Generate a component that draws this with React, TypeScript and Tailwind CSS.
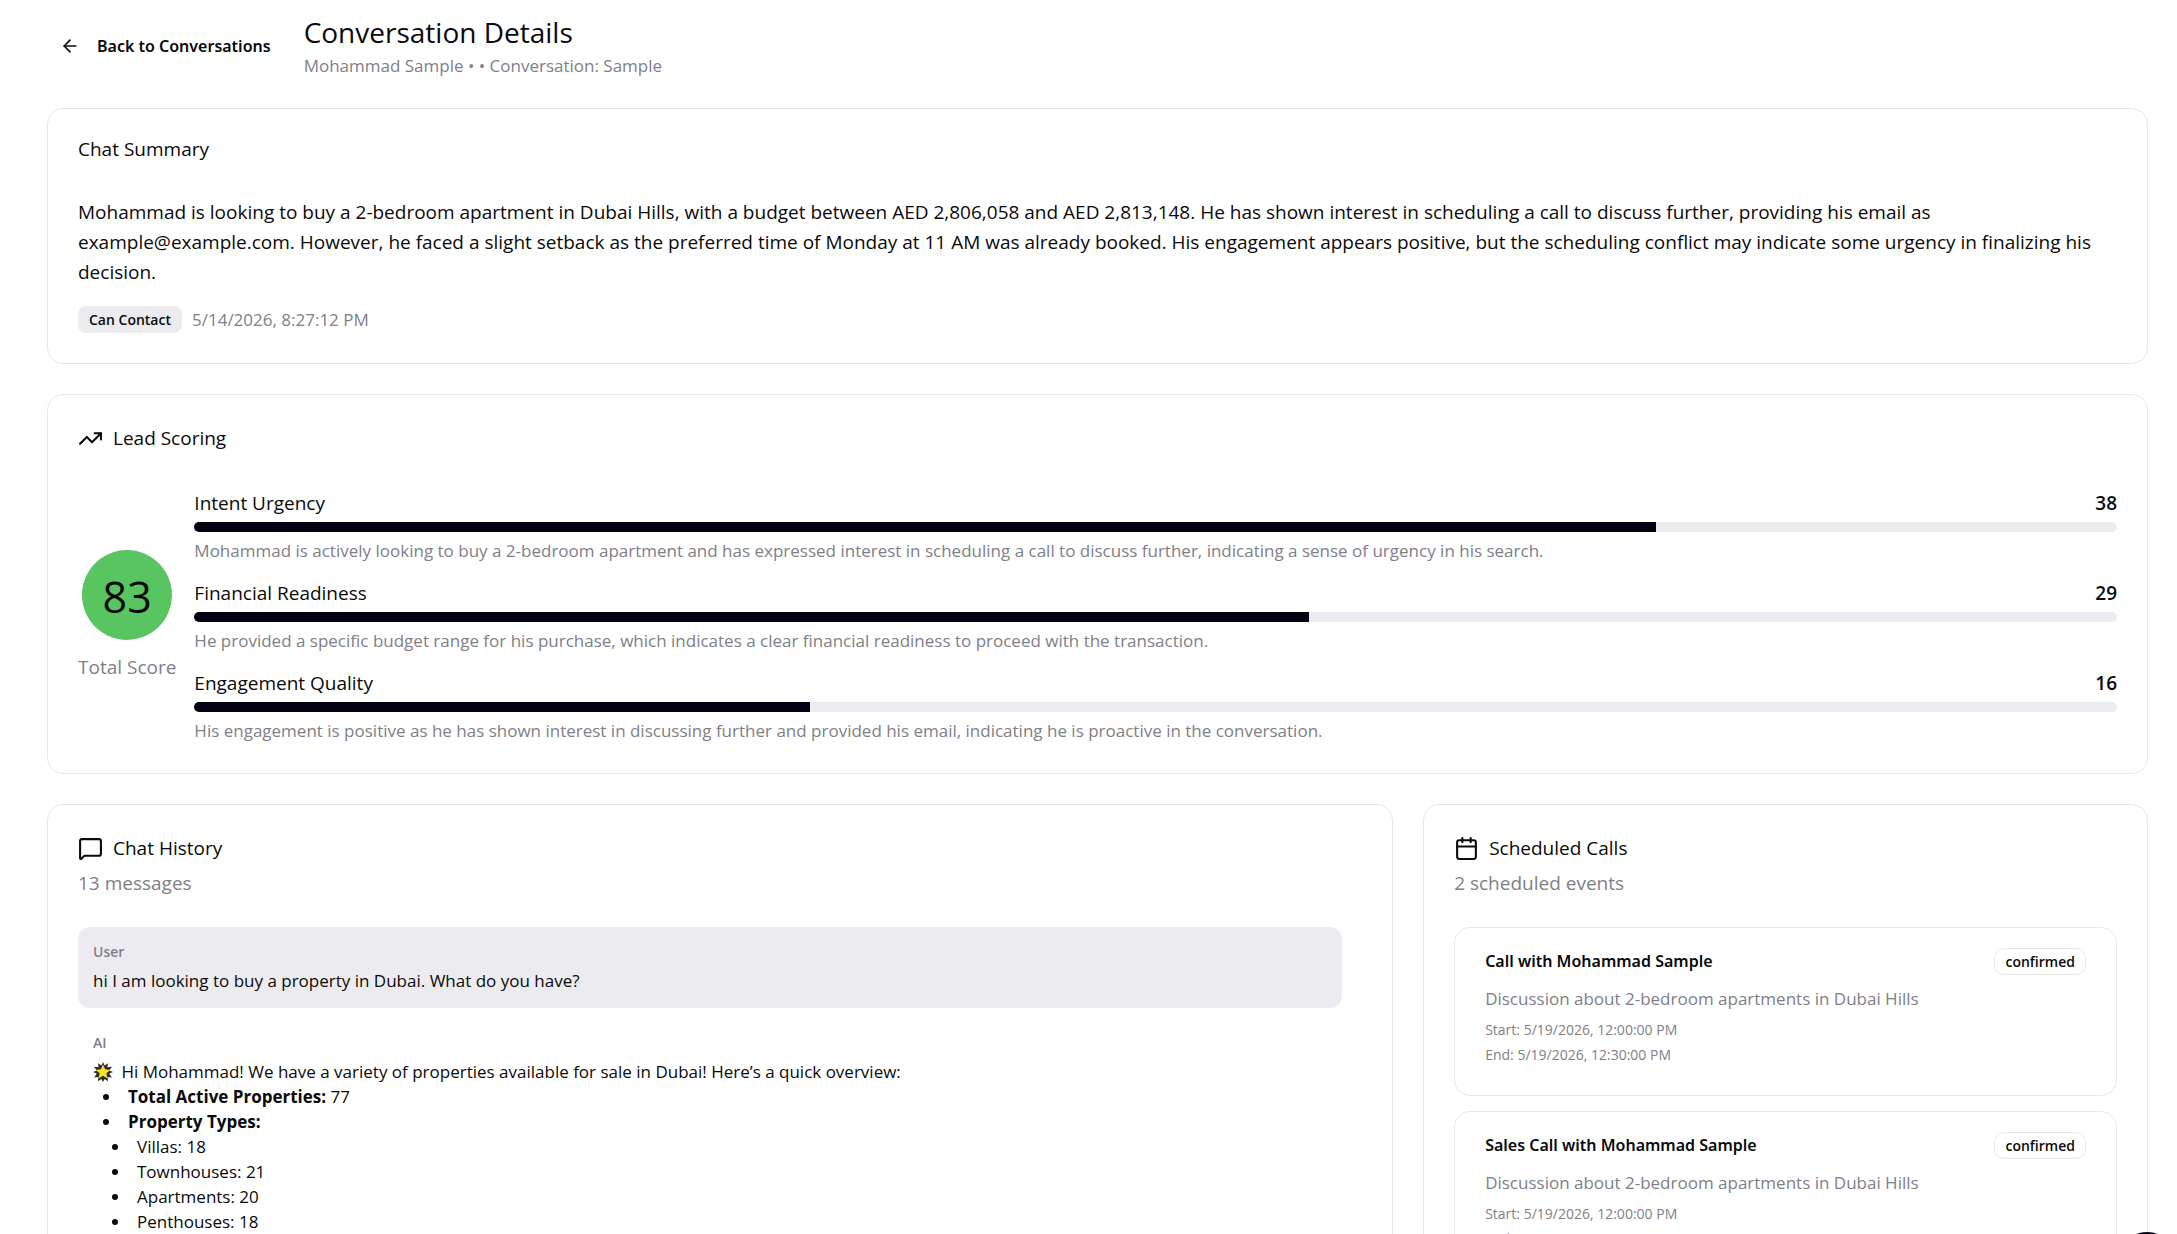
import { ArrowLeft, Calendar, MessageSquare, TrendingUp } from "lucide-react";

const scores = [
  {
    label: "Intent Urgency",
    value: 38,
    percent: 76,
    note: "Mohammad is actively looking to buy a 2-bedroom apartment and has expressed interest in scheduling a call to discuss further, indicating a sense of urgency in his search.",
  },
  {
    label: "Financial Readiness",
    value: 29,
    percent: 58,
    note: "He provided a specific budget range for his purchase, which indicates a clear financial readiness to proceed with the transaction.",
  },
  {
    label: "Engagement Quality",
    value: 16,
    percent: 32,
    note: "His engagement is positive as he has shown interest in discussing further and provided his email, indicating he is proactive in the conversation.",
  },
];

const propertyTypes = [
  "Villas: 18",
  "Townhouses: 21",
  "Apartments: 20",
  "Penthouses: 18",
];

const calls = [
  {
    title: "Call with Mohammad Sample",
    description: "Discussion about 2-bedroom apartments in Dubai Hills",
    start: "5/19/2026, 12:00:00 PM",
    end: "5/19/2026, 12:30:00 PM",
  },
  {
    title: "Sales Call with Mohammad Sample",
    description: "Discussion about 2-bedroom apartments in Dubai Hills",
    start: "5/19/2026, 12:00:00 PM",
    end: "5/19/2026, 12:30:00 PM",
  },
];

function GlowingStar() {
  return (
    <svg viewBox="0 0 20 20" className="inline-block size-5 mr-1 align-[-4px]" aria-hidden="true">
      <path
        d="M10 0l1.6 3.4L15 1.3l-.6 3.9 4.6-.4-2.8 3.6L20 10l-3.8 1.6 2.6 3.8-4.2-.4.4 4.2-3.4-2.2L10 20l-1.6-3L5 19.2l.4-4.2-4.2.4 2.6-3.8L0 10l3.8-1.6L1 4.8l4.6.4L5 1.3l3.4 2.1z"
        fill="#2b2b2b"
      />
      <path
        d="M10 2.6l2.1 4.7 5.1.6-3.8 3.4 1.1 5.1-4.5-2.6-4.5 2.6 1.1-5.1-3.8-3.4 5.1-.6z"
        fill="#f7e12b"
      />
    </svg>
  );
}

function Summary() {
  return (
    <section className="border border-[#e8e8e8] rounded-2xl p-[30px]">
      <h2 className="leading-5">Chat Summary</h2>
      <p className="mt-[38px]">
        Mohammad is looking to buy a 2-bedroom apartment in Dubai Hills, with a
        budget between AED 2,806,058 and AED 2,813,148. He has shown interest in
        scheduling a call to discuss further, providing his email as
        example@example.com. However, he faced a slight setback as the preferred
        time of Monday at 11 AM was already booked. His engagement appears
        positive, but the scheduling conflict may indicate some urgency in
        finalizing his decision.
      </p>
      <div className="flex items-center gap-[10px] mt-[19px]">
        <span className="bg-[#ececf0] rounded-lg px-[11px] text-sm leading-[27px] font-semibold">
          Can Contact
        </span>
        <span className="text-[17px] leading-[25px] text-[#808087]">
          5/14/2026, 8:27:12 PM
        </span>
      </div>
    </section>
  );
}

function LeadScoring() {
  return (
    <section className="border border-[#e8e8e8] rounded-2xl p-[30px]">
      <h2 className="flex items-center gap-[10px] leading-[26px]">
        <TrendingUp className="size-[25px]" />
        Lead Scoring
      </h2>
      <div className="flex items-center gap-[18px] mt-[37px]">
        <div className="flex flex-col items-center gap-3">
          <div className="size-[90px] pt-1 rounded-full bg-[#59c561] flex items-center justify-center text-[43px]">
            83
          </div>
          <div className="text-[#808087] whitespace-nowrap">Total Score</div>
        </div>
        <div className="flex-1 flex flex-col gap-[15px]">
          {scores.map((score) => (
            <div key={score.label}>
              <div className="flex justify-between">
                <span>{score.label}</span>
                <span className="font-semibold">{score.value}</span>
              </div>
              <div className="h-[10px] mt-1 rounded-full bg-[#ececf0] overflow-hidden">
                <div
                  className="h-full bg-[#030213]"
                  style={{ width: `${score.percent}%` }}
                />
              </div>
              <p className="mt-[6px] text-[17px] leading-[25px] text-[#808087]">
                {score.note}
              </p>
            </div>
          ))}
        </div>
      </div>
    </section>
  );
}

function ChatHistory() {
  return (
    <section className="border border-[#e8e8e8] rounded-2xl p-[30px]">
      <h2 className="flex items-center gap-[10px] leading-[26px]">
        <MessageSquare className="size-[25px]" />
        Chat History
      </h2>
      <p className="mt-[7px] text-[#808087]">13 messages</p>
      <div className="flex flex-col gap-[10px] mt-[29px] mr-5">
        <div className="bg-[#ececf0] rounded-xl p-[15px]">
          <div className="text-sm leading-5 font-semibold text-[#808087]">User</div>
          <p className="mt-[6px] text-[17px] leading-[25px]">
            hi I am looking to buy a property in Dubai. What do you have?
          </p>
        </div>
        <div className="p-[15px]">
          <div className="text-sm leading-5 font-semibold text-[#808087]">AI</div>
          <div className="mt-[6px] text-[17px] leading-[25px]">
            <p>
              <GlowingStar /> Hi Mohammad! We have a variety of properties
              available for sale in Dubai! Here’s a quick overview:
            </p>
            <ul className="list-disc pl-[29px]">
              <li className="pl-[6px]">
                <strong>Total Active Properties:</strong> 77
              </li>
              <li className="pl-[6px]">
                <strong>Property Types:</strong>
                <ul className="list-disc pl-[3px]">
                  {propertyTypes.map((type) => (
                    <li key={type} className="pl-[6px]">
                      {type}
                    </li>
                  ))}
                </ul>
              </li>
            </ul>
          </div>
        </div>
      </div>
    </section>
  );
}

function ScheduledCalls() {
  return (
    <section className="border border-[#e8e8e8] rounded-2xl p-[30px]">
      <h2 className="flex items-center gap-[10px] leading-[26px]">
        <Calendar className="size-[25px]" />
        Scheduled Calls
      </h2>
      <p className="mt-[7px] text-[#808087]">2 scheduled events</p>
      <div className="flex flex-col gap-[15px] mt-[29px]">
        {calls.map((call) => (
          <article
            key={call.title}
            className="border border-[#e8e8e8] rounded-2xl px-[30px] pt-5 pb-[30px]"
          >
            <div className="flex items-center justify-between">
              <h3 className="font-['Noto_Sans',sans-serif] text-base leading-[25px] font-semibold">
                {call.title}
              </h3>
              <span className="border border-[#e8e8e8] rounded-[10px] px-[10px] text-sm leading-[25px] font-semibold">
                confirmed
              </span>
            </div>
            <p className="mt-[11px] text-[17px] leading-[25px] text-[#808087]">
              {call.description}
            </p>
            <div className="flex flex-col gap-[5px] mt-[9px] text-sm leading-5 text-[#808087]">
              <div>Start: {call.start}</div>
              <div>End: {call.end}</div>
            </div>
          </article>
        ))}
      </div>
    </section>
  );
}

export default function App() {
  return (
    <div className="h-screen overflow-hidden bg-white text-[#0a0a0a] text-[19px] leading-[30px] font-['Open_Sans',sans-serif] pl-[47px] pr-[29px] pt-[14px]">
      <header className="flex items-center">
        <button
          type="button"
          className="flex items-center gap-[17px] px-[13px] font-['Noto_Sans',sans-serif] text-base leading-[25px] font-semibold"
        >
          <ArrowLeft className="size-5" />
          Back to Conversations
        </button>
        <div className="ml-5">
          <h1 className="text-[28px] leading-[37px]">Conversation Details</h1>
          <p className="mt-[2px] text-[17px] leading-[25px] text-[#808087]">
            Mohammad Sample • • Conversation: Sample
          </p>
        </div>
      </header>
      <main className="flex flex-col gap-[30px] mt-[30px]">
        <Summary />
        <LeadScoring />
        <div className="grid grid-cols-[13fr_7fr] items-start gap-[30px]">
          <ChatHistory />
          <ScheduledCalls />
        </div>
      </main>
      <button
        type="button"
        aria-label="Help"
        className="fixed right-0 -bottom-[58px] size-[60px] rounded-full bg-[#030213]"
      />
    </div>
  );
}
